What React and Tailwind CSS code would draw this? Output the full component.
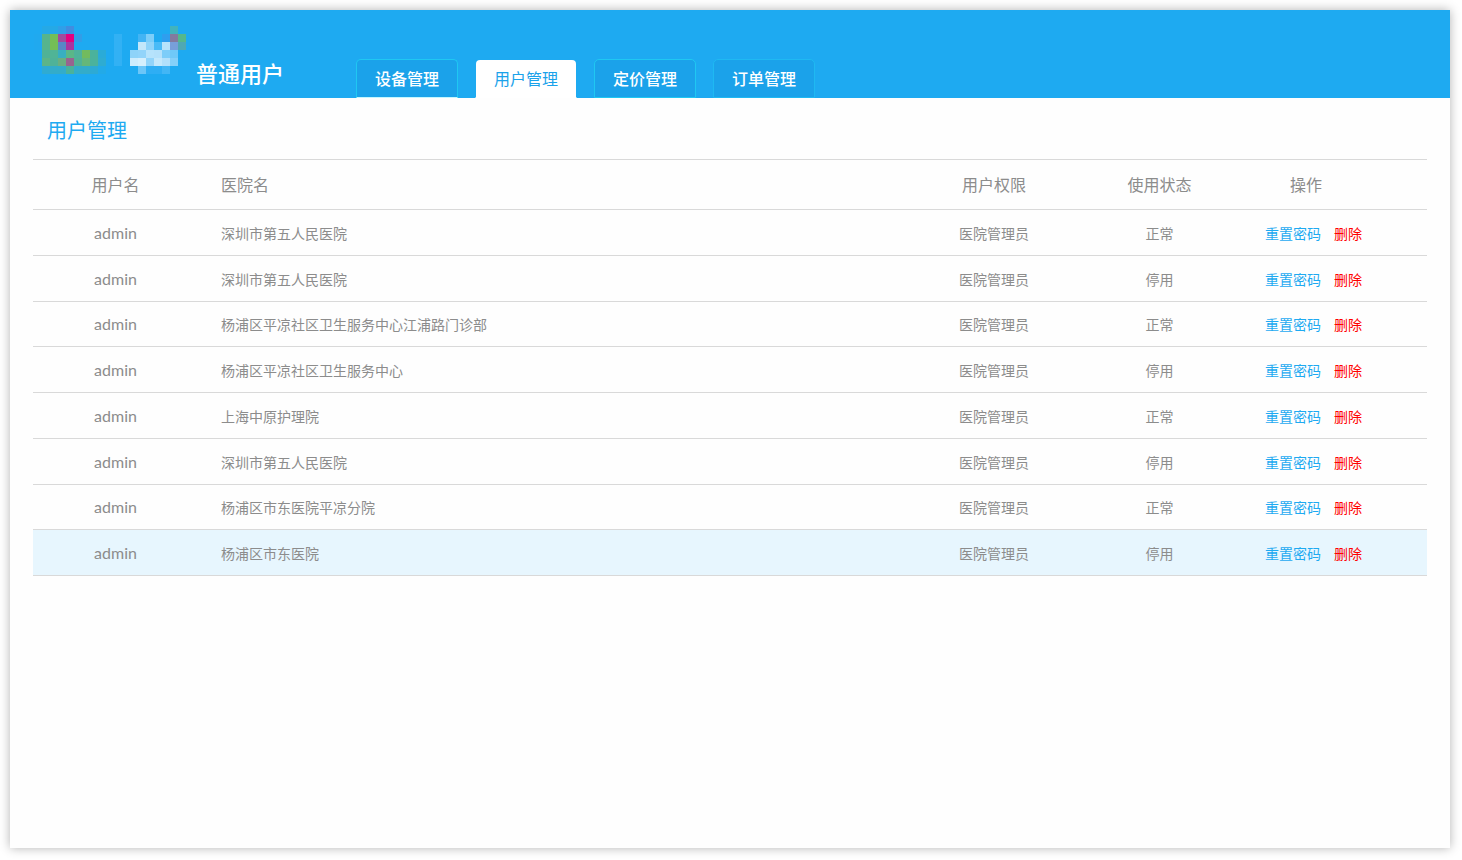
const logoRows = [
  { y: 0, cells: [[8, '#25a9e6'], [16, '#25a9e6'], [24, '#309fe8'], [32, '#408de0'], [136, '#42b3bc']] },
  { y: 8, cells: [[0, '#20a9ef'], [8, '#56b48c'], [16, '#74be56'], [24, '#a24b9c'], [32, '#e6007f'], [40, '#329de8'], [104, '#42b4f4'], [112, '#7ccef9'], [128, '#2f9eee'], [136, '#837a9e'], [144, '#55b78c']] },
  { y: 16, cells: [[0, '#20a9ef'], [8, '#56b48c'], [16, '#74be56'], [24, '#5887c6'], [32, '#aa35a0'], [104, '#c3e7fa'], [112, '#8fd4fa'], [120, '#49bbf7'], [128, '#b6e3fb'], [136, '#789fd9'], [144, '#4fa8b4']] },
  { y: 24, cells: [[8, '#50b296'], [16, '#50b496'], [24, '#38afc0'], [32, '#5ab788'], [40, '#4fb29b'], [48, '#72bb5e'], [56, '#4bb29c'], [64, '#2aabd8'], [96, '#8ed3f9'], [104, '#92d4fa'], [112, '#b6e3fc'], [120, '#b4e1fb'], [128, '#7ccdf9'], [136, '#6fc9f8']] },
  { y: 32, cells: [[8, '#5cb488'], [16, '#4fb298'], [24, '#6aaf80'], [32, '#98648f'], [40, '#50b296'], [48, '#65b779'], [56, '#4bb29c'], [64, '#2eacd2'], [96, '#cdecfd'], [104, '#d5effd'], [112, '#92d4fa'], [120, '#c3e8fc'], [128, '#b2e0fb'], [136, '#84d0f9']] },
  { y: 40, cells: [[8, '#2fabd2'], [16, '#33acca'], [24, '#33acca'], [32, '#4ab29b'], [40, '#33acca'], [48, '#33acca'], [56, '#2daad4'], [64, '#22aae8'], [104, '#6cc6f8'], [112, '#2eaef4'], [120, '#2eaef4'], [128, '#42b6f5']] },
];

function Logo() {
  return (
    <svg className="h-12 w-[152px] shrink-0" viewBox="0 0 152 48" shapeRendering="crispEdges" aria-hidden="true">
      <rect x="80" y="8" width="8" height="32" fill="#32b1f4" />
      {logoRows.map((row) =>
        row.cells.map(([x, fill]) => <rect key={`${x}-${row.y}`} x={x} y={row.y} width="8" height="8" fill={fill} />)
      )}
    </svg>
  );
}

const tabs = [
  { label: '设备管理', style: 'border-[#1fc8f2] border-b-[#c4f6ff] bg-[#1ba2ea] text-white font-medium' },
  { label: '用户管理', style: 'border-transparent bg-white bg-clip-padding border-b-white text-[#1ba2ea]', current: true },
  { label: '定价管理', style: 'border-[#1fc8f2] bg-[#1ba2ea] text-white font-medium' },
  { label: '订单管理', style: 'border-[#1fb9f2] bg-[#1ba2ea] text-white font-medium' },
];

const users = [
  { hospital: '深圳市第五人民医院', status: '正常' },
  { hospital: '深圳市第五人民医院', status: '停用' },
  { hospital: '杨浦区平凉社区卫生服务中心江浦路门诊部', status: '正常' },
  { hospital: '杨浦区平凉社区卫生服务中心', status: '停用' },
  { hospital: '上海中原护理院', status: '正常' },
  { hospital: '深圳市第五人民医院', status: '停用' },
  { hospital: '杨浦区市东医院平凉分院', status: '正常' },
  { hospital: '杨浦区市东医院', status: '停用', selected: true },
];

export default function App() {
  return (
    <div className="flex min-h-screen bg-white pt-[10px] pr-3 pb-3 pl-[10px] font-['Noto_Sans_CJK_SC',sans-serif] text-[#8c8c8c]">
      <div className="flex-1 bg-[#fefefe] shadow-[0_0_10px_rgba(0,0,0,0.3)]">
        <header className="flex h-[88px] items-end bg-[#1eaaf1] pl-6">
          <div className="flex h-full items-start gap-[10px] pt-4">
            <Logo />
            <span className="pt-8 text-[22px] leading-7 font-medium whitespace-nowrap text-white">普通用户</span>
          </div>
          <nav className="ml-[72px] flex gap-[17px]">
            {tabs.map((tab) => (
              <a
                key={tab.label}
                href="#"
                aria-current={tab.current ? 'page' : undefined}
                className={`flex h-[39px] w-[102px] items-center justify-center rounded-t-[5px] border pb-[2px] text-[16px] leading-6 whitespace-nowrap ${tab.style}`}
              >
                {tab.label}
              </a>
            ))}
          </nav>
        </header>

        <main className="px-[23px]">
          <h1 className="px-[14px] pt-4 pb-[13px] text-[20px] leading-8 text-[#1eaaf1]">用户管理</h1>
          <table className="w-full table-fixed border-separate border-spacing-0 border-t border-[#d9d9d9] text-sm">
            <colgroup>
              <col className="w-[165px]" />
              <col />
              <col className="w-[128px]" />
              <col className="w-[203px]" />
              <col className="w-[166px]" />
            </colgroup>
            <thead>
              <tr className="h-[50px] text-[16px] leading-6 *:border-b *:border-[#d9d9d9] *:px-0 *:pt-0 *:pb-[2px] *:font-normal">
                <th scope="col">用户名</th>
                <th scope="col" className="text-left"><span className="pl-[23px]">医院名</span></th>
                <th scope="col">用户权限</th>
                <th scope="col">使用状态</th>
                <th scope="col" className="text-left"><span className="pl-[29px]">操作</span></th>
              </tr>
            </thead>
            <tbody>
              {users.map((user, i) => (
                <tr
                  key={i}
                  className={`h-[46px] text-center leading-5 nth-[4n+3]:h-[45px] *:border-b *:border-[#d9d9d9] *:p-0 ${user.selected ? 'bg-[#e7f6fe]' : ''}`}
                >
                  <td className="font-['Lato',sans-serif] text-[16px]">admin</td>
                  <td className="text-left"><span className="pl-[23px]">{user.hospital}</span></td>
                  <td>医院管理员</td>
                  <td>{user.status}</td>
                  <td>
                    <div className="flex gap-[13px] pl-1">
                      <button type="button" className="text-[#1eaaf1]">重置密码</button>
                      <button type="button" className="text-[#ff0000]">删除</button>
                    </div>
                  </td>
                </tr>
              ))}
            </tbody>
          </table>
        </main>
      </div>
    </div>
  );
}
